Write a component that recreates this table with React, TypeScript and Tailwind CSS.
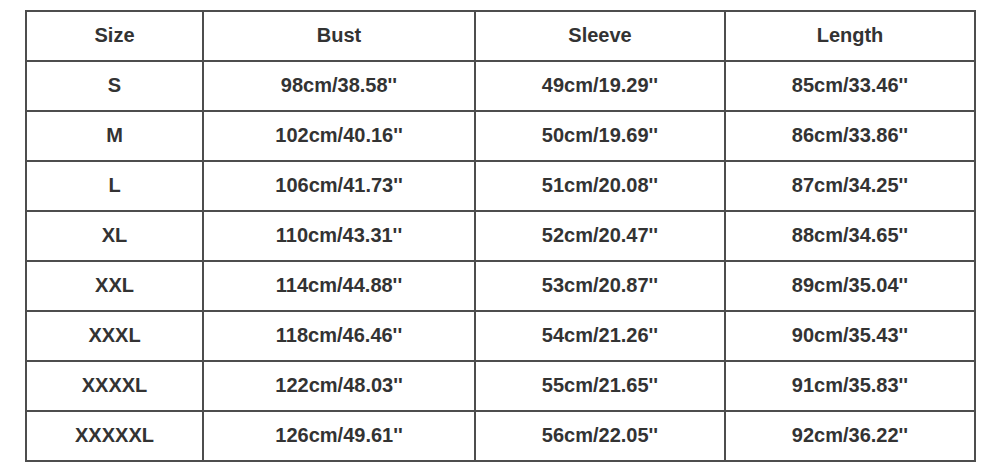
const HEADERS = ["Size", "Bust", "Sleeve", "Length"];

const ROWS: string[][] = [
  ["S", "98cm/38.58''", "49cm/19.29''", "85cm/33.46''"],
  ["M", "102cm/40.16''", "50cm/19.69''", "86cm/33.86''"],
  ["L", "106cm/41.73''", "51cm/20.08''", "87cm/34.25''"],
  ["XL", "110cm/43.31''", "52cm/20.47''", "88cm/34.65''"],
  ["XXL", "114cm/44.88''", "53cm/20.87''", "89cm/35.04''"],
  ["XXXL", "118cm/46.46''", "54cm/21.26''", "90cm/35.43''"],
  ["XXXXL", "122cm/48.03''", "55cm/21.65''", "91cm/35.83''"],
  ["XXXXXL", "126cm/49.61''", "56cm/22.05''", "92cm/36.22''"],
];

function Cell({ text }: { text: string }) {
  return (
    <div className="flex h-[48px] items-center justify-center bg-white pb-[2px] text-[20px] font-bold text-[#333]">
      {text}
    </div>
  );
}

export default function App() {
  return (
    <div className="h-[471px] w-[1000px] bg-white pl-[25px] pt-[10px] font-['Liberation_Sans',Arial,sans-serif]">
      <div className="inline-grid grid-cols-[175px_270px_248px_248px] gap-[2px] bg-[#4d4d4d] p-[2px]">
        {HEADERS.map((h) => (
          <Cell key={h} text={h} />
        ))}
        {ROWS.map((row) =>
          row.map((value, i) => <Cell key={row[0] + i} text={value} />),
        )}
      </div>
    </div>
  );
}
